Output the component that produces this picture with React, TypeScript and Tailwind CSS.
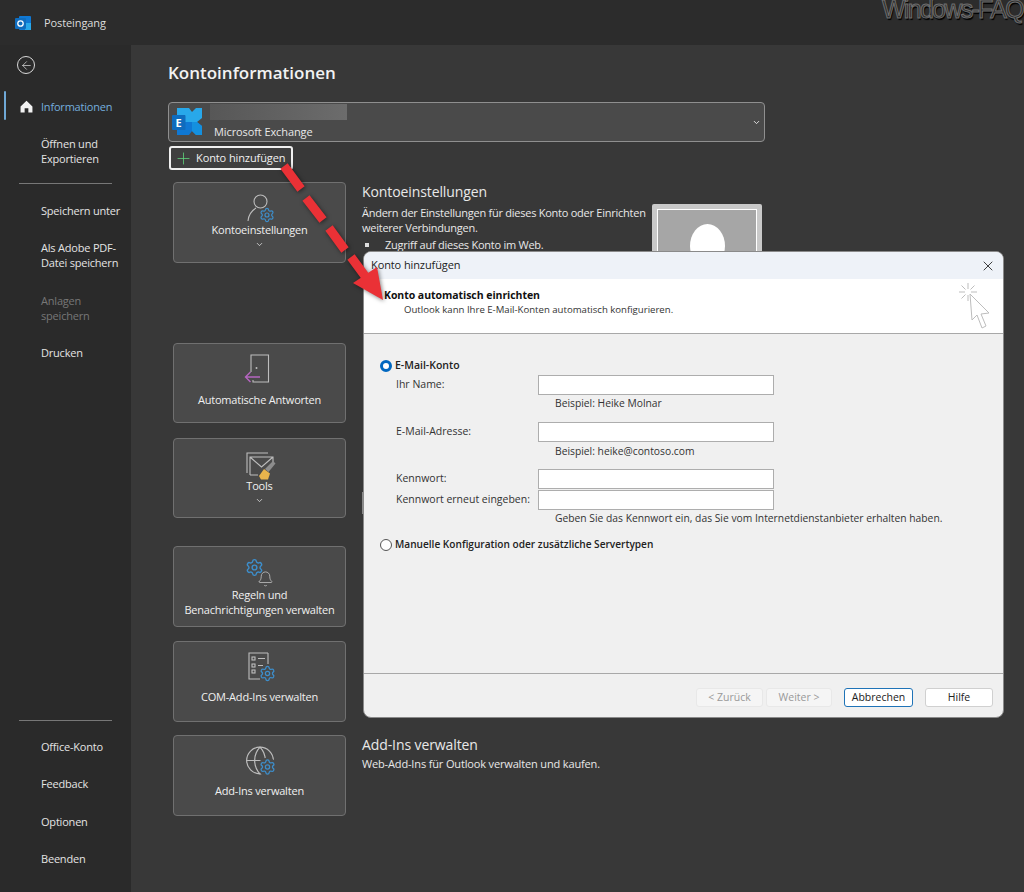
import { ArrowLeft, Bell, ChevronDown, Globe, Plus, Settings, X } from "lucide-react";
import type { ReactNode } from "react";

const FONT = "font-['Open_Sans','Noto_Sans',sans-serif]";
const LINE = "#bdbdbd";
const GEAR = "#3d8ecb";

function SideItem({ lines, className = "", muted = false }: { lines: string[]; className?: string; muted?: boolean }) {
  return (
    <div className={`pl-[41px] text-[11px] leading-[15px] tracking-[-0.2px] ${muted ? "text-[#777]" : "text-[#e4e4e4]"} ${className}`}>
      {lines.map((l) => (
        <div key={l}>{l}</div>
      ))}
    </div>
  );
}

function Sidebar() {
  return (
    <aside className="flex h-full w-[131px] shrink-0 flex-col bg-[#2a2a2a] pb-[26px] pt-[11px]">
      <div className="ml-[17px] flex h-[18px] w-[18px] items-center justify-center rounded-full border border-[#d8d8d8]">
        <ArrowLeft size={13} strokeWidth={1.3} color="#e0e0e0" />
      </div>
      <div className="relative mt-[17px] flex h-[30px] items-center">
        <div className="absolute left-[4px] top-0 h-[29px] w-[2px] rounded bg-[#6fa8d6]" />
        <svg viewBox="0 0 14 14" className="absolute left-[20px] top-[9px] h-[13px] w-[13px]" fill="#f2f2f2">
          <path d="M7 .8 13.4 7v6.4H9V9H5v4.4H.6V7z" />
        </svg>
        <SideItem lines={["Informationen"]} className="!text-[#74aede]" />
      </div>
      <SideItem lines={["Öffnen und", "Exportieren"]} className="mt-[15px]" />
      <div className="ml-[19px] mt-[17px] h-px w-[93px] bg-[#777]" />
      <SideItem lines={["Speichern unter"]} className="mt-[19px]" />
      <SideItem lines={["Als Adobe PDF-", "Datei speichern"]} className="mt-[22px]" />
      <SideItem lines={["Anlagen", "speichern"]} className="mt-[23px]" muted />
      <SideItem lines={["Drucken"]} className="mt-[22px]" />
      <div className="ml-[19px] mt-auto h-px w-[93px] bg-[#777]" />
      <SideItem lines={["Office-Konto"]} className="mt-[18px]" />
      <SideItem lines={["Feedback"]} className="mt-[22px]" />
      <SideItem lines={["Optionen"]} className="mt-[23px]" />
      <SideItem lines={["Beenden"]} className="mt-[22px]" />
    </aside>
  );
}

function Gear({ x, y, size = 15 }: { x: number; y: number; size?: number }) {
  return <Settings x={x} y={y} width={size} height={size} color={GEAR} strokeWidth={1.8} />;
}

function UserIcon() {
  return (
    <svg viewBox="0 0 32 32" className="h-[32px] w-[32px]" fill="none" stroke={LINE} strokeWidth="1.1">
      <circle cx="16.500" cy="8.500" r="6.500" />
      <path d="M4 28c.5-7 4-10.500 8-13" />
      <Gear x={15} y={14} size={16} />
    </svg>
  );
}

function DoorIcon() {
  return (
    <svg viewBox="0 0 32 32" className="h-[32px] w-[32px]" fill="none" stroke={LINE} strokeWidth="1.1">
      <path d="M7 18V1h17.500v27H9v-2" />
      <circle cx="12.500" cy="14" r="1" fill={LINE} stroke="none" />
      <path d="M16 23H1.500M6.500 18l-5 5 5 5" stroke="#b565c0" strokeWidth="1.400" />
    </svg>
  );
}

function MailIcon() {
  return (
    <svg viewBox="0 0 32 32" className="h-[32px] w-[32px]" fill="none" stroke={LINE} strokeWidth="1.1">
      <path d="M3 22V2h21" />
      <path d="M6 24V6h23v7M6 6l11.500 10L29 6M6 24h8" />
      <path d="m21 18 8-8 2.500 2.500-7 8.500z" fill="#8d8d8d" stroke="none" />
      <path d="m15 25 5-7 6 4.500-2 6h-7z" fill="#e9b44c" stroke="none" />
    </svg>
  );
}

function RulesIcon() {
  return (
    <svg viewBox="0 0 32 32" className="h-[32px] w-[32px]" fill="none">
      <Gear x={1} y={1} size={19} />
      <Bell x={13} y={12} width={17} height={20} color={LINE} strokeWidth={1.2} />
    </svg>
  );
}

function ListIcon() {
  return (
    <svg viewBox="0 0 32 32" className="h-[32px] w-[32px]" fill="none" stroke={LINE} strokeWidth="1.1">
      <path d="M24 1H5v26h11M24 1v11" />
      <rect x="8" y="5" width="3" height="3" />
      <rect x="8" y="12" width="3" height="3" />
      <rect x="8" y="18" width="3" height="3" />
      <path d="M14 6.500h7M14 13.500h5" />
      <Gear x={15} y={13} size={17} />
    </svg>
  );
}

function GlobeIcon() {
  return (
    <svg viewBox="0 0 32 32" className="h-[32px] w-[32px]" fill="none">
      <Globe x={0} y={-1.5} width={32} height={32} color={LINE} strokeWidth={0.9} />
      <circle cx="23.500" cy="21" r="9.500" fill="#4a4a4a" />
      <Gear x={15} y={12.5} size={17} />
    </svg>
  );
}

function Card({
  icon,
  label,
  chevron,
  pad = "pt-[10px]",
  gap,
}: {
  icon: ReactNode;
  label: string[];
  chevron?: boolean;
  pad?: string;
  gap: string;
}) {
  return (
    <div className={`ml-[5px] flex h-full w-[173px] shrink-0 flex-col items-center rounded-[4px] border border-[#707070] bg-[#4a4a4a] ${pad}`}>
      {icon}
      <div className={`text-center text-[11px] font-medium leading-[15px] tracking-[-0.2px] text-[#f0f0f0] ${gap}`}>
        {label.map((l) => (
          <div key={l}>{l}</div>
        ))}
      </div>
      {chevron && <ChevronDown size={9} strokeWidth={2} color="#e8e8e8" className="mt-[3px]" />}
    </div>
  );
}

function Section({ className, card, children }: { className: string; card: ReactNode; children?: ReactNode }) {
  return (
    <section className={`flex items-start ${className}`}>
      {card}
      <div className="ml-[16px] min-w-0 flex-1 text-[#e8e8e8]">{children}</div>
    </section>
  );
}

function SectionTitle({ children }: { children: ReactNode }) {
  return <h2 className="text-[14px] leading-[20px] tracking-[-0.1px] text-[#e8e8e8]">{children}</h2>;
}

function ExchangeLogo() {
  return (
    <svg viewBox="0 0 30 28" className="h-[28px] w-[30px]">
      <path d="M5 0h12l3 4 4-4h6v10l-5 4H13V7H5z" fill="#28a8ea" />
      <path d="M13 14h12l5 4v9h-6l-4-4-3 4H5v-6h8z" fill="#0f78d4" />
      <path d="M20 14h5l5 4v9h-6l-4-4z" fill="#1490df" />
      <rect x="0" y="7" width="13.500" height="15" rx="1" fill="#0f6cbd" />
      <text x="6.700" y="18.500" textAnchor="middle" fontSize="11" fontWeight="700" fill="#fff">
        E
      </text>
    </svg>
  );
}

function Main() {
  return (
    <main className="h-full min-w-0 flex-1 bg-[#383838] pl-[37px] pt-[16px]">
      <h1 className="text-[17px] font-semibold leading-[24px] text-[#f2f2f2]">Kontoinformationen</h1>
      <div className="relative mt-[17px] flex h-[40px] w-[597px] items-center rounded-[4px] border border-[#8f8f8f] bg-[#4a4a4a] pl-[3px]">
        <ExchangeLogo />
        <div className="ml-[8px] flex h-full flex-col">
          <div className="mt-[1px] h-[16px] w-[137px] bg-gradient-to-r from-[#575757] to-[#6c6c6c]" />
          <div className="mt-[4px] pl-[4px] text-[11px] leading-[15px] tracking-[-0.1px] text-[#e8e8e8]">Microsoft Exchange</div>
        </div>
        <ChevronDown size={9} strokeWidth={2.5} color="#e8e8e8" className="absolute right-[3px] top-[15px]" />
      </div>
      <button className="ml-[1px] mt-[4px] flex h-[24px] w-[124px] items-center rounded-[3px] border-2 border-[#f0f0f0] bg-[#3f3f3f] pl-[3px] text-[11px] tracking-[-0.1px] text-[#f0f0f0]">
        <Plus size={19} strokeWidth={1} color="#5fd47b" />
        <span className="ml-[3px]">Konto hinzufügen</span>
      </button>

      <Section
        className="mt-[12px] h-[81px]"
        card={<Card icon={<UserIcon />} label={["Kontoeinstellungen"]} chevron gap="mt-[-3px]" />}
      >
        <div className="flex">
          <div className="w-[290px] shrink-0">
            <SectionTitle>Kontoeinstellungen</SectionTitle>
            <p className="mt-[3px] text-[11px] leading-[15px] tracking-[-0.25px]">
              <span className="block whitespace-nowrap">Ändern der Einstellungen für dieses Konto oder Einrichten</span>
              <span className="block">weiterer Verbindungen.</span>
            </p>
            <div className="mt-[2px] flex items-center text-[11px] leading-[15px] tracking-[-0.25px]">
              <span className="ml-[3px] h-[4px] w-[4px] bg-[#ddd]" />
              <span className="ml-[16px]">Zugriff auf dieses Konto im Web.</span>
            </div>
          </div>
          <div className="mt-[22px] h-[110px] w-[110px] shrink-0 rounded-[2px] bg-[#c9c9c9] p-[5px]">
            <div className="flex h-full justify-center border border-white bg-[#a6a6a6] pt-[14px]">
              <div className="h-[44px] w-[35px] rounded-[50%] bg-white" />
            </div>
          </div>
        </div>
      </Section>
      <Section
        className="mt-[80px] h-[80px]"
        card={<Card icon={<DoorIcon />} label={["Automatische Antworten"]} gap="mt-[6px]" />}
      />
      <Section
        className="mt-[15px] h-[80px]"
        card={<Card icon={<MailIcon />} label={["Tools"]} chevron pad="pt-[12px]" gap="mt-[-5px]" />}
      >
        <div className="mt-[54px] h-[22px] w-[6px] border border-[#8a8a8a]" />
      </Section>
      <Section
        className="mt-[28px] h-[81px]"
        card={<Card icon={<RulesIcon />} label={["Regeln und", "Benachrichtigungen verwalten"]} gap="mt-[-2px]" />}
      />
      <Section
        className="mt-[14px] h-[81px]"
        card={<Card icon={<ListIcon />} label={["COM-Add-Ins verwalten"]} gap="mt-[5px]" />}
      />
      <Section
        className="mt-[13px] h-[81px]"
        card={<Card icon={<GlobeIcon />} label={["Add-Ins verwalten"]} gap="mt-[5px]" />}
      >
        <SectionTitle>Add-Ins verwalten</SectionTitle>
        <p className="mt-[1px] text-[11px] leading-[15px] tracking-[-0.15px]">Web-Add-Ins für Outlook verwalten und kaufen.</p>
      </Section>
    </main>
  );
}

function Field({ label, className }: { label: string; className: string }) {
  return (
    <div className={`flex h-[20px] items-center pl-[32px] ${className}`}>
      <label className="w-[142px] text-[10.500px] text-[#333]">{label}</label>
      <input className="h-[20px] w-[236px] border border-[#adadad] bg-white" />
    </div>
  );
}

function Hint({ children, className }: { children: ReactNode; className: string }) {
  return <div className={`h-[14px] pl-[191px] text-[10.300px] leading-[14px] text-[#333] ${className}`}>{children}</div>;
}

function WizardCursor() {
  return (
    <svg viewBox="0 0 32 46" className="h-[46px] w-[32px]" fill="none" stroke="#bdbdbd" strokeWidth="1">
      <path d="M9 0v6M9 12v6M0 9h6M12 9h6M2.500 2.500l4 4M15.500 2.500l-4 4M2.500 15.500l4-4" />
      <path d="m11 11 2 26 5-5 5 13 4-2-5-12 8-1z" fill="#fff" />
    </svg>
  );
}

function Dialog() {
  return (
    <div className="absolute left-[363px] top-[251px] flex h-[467px] w-[641px] flex-col overflow-hidden rounded-[8px] border border-[#8a8a8a] bg-[#f0f0f0] text-black">
      <div className="flex h-[27px] shrink-0 items-center justify-between bg-[#eef2f8] px-[7px]">
        <span className="text-[11px] tracking-[-0.1px] text-[#222]">Konto hinzufügen</span>
        <X size={16} strokeWidth={1.3} color="#222" />
      </div>
      <div className="flex h-[55px] shrink-0 justify-between border-b border-[#a8a8a8] bg-white pl-[20px] pr-[12px] pt-[9px]">
        <div>
          <div className="text-[10.500px] font-bold leading-[14px] tracking-[-0.05px] text-[#111]">Konto automatisch einrichten</div>
          <div className="pl-[20px] text-[9.600px] leading-[16px] text-[#333]">
            Outlook kann Ihre E-Mail-Konten automatisch konfigurieren.
          </div>
        </div>
        <div className="-mt-[5px]">
          <WizardCursor />
        </div>
      </div>
      <div className="flex-1 pt-[25px]">
        <div className="flex h-[14px] items-center pl-[16px]">
          <span className="h-[12px] w-[12px] rounded-full border-[3.500px] border-[#0067c0] bg-white" />
          <span className="ml-[3px] text-[10.500px] font-semibold text-[#222]">E-Mail-Konto</span>
        </div>
        <Field label="Ihr Name:" className="mt-[2px]" />
        <Hint className="mt-[1px]">Beispiel: Heike Molnar</Hint>
        <Field label="E-Mail-Adresse:" className="mt-[12px]" />
        <Hint className="mt-[2px]">Beispiel: heike@contoso.com</Hint>
        <Field label="Kennwort:" className="mt-[11px]" />
        <Field label="Kennwort erneut eingeben:" className="mt-[1px]" />
        <Hint className="mt-[1px]">Geben Sie das Kennwort ein, das Sie vom Internetdienstanbieter erhalten haben.</Hint>
        <div className="mt-[13px] flex h-[14px] items-center pl-[16px]">
          <span className="h-[12px] w-[12px] rounded-full border border-[#555] bg-white" />
          <span className="ml-[3px] text-[10.100px] font-semibold text-[#222]">
            Manuelle Konfiguration oder zusätzliche Servertypen
          </span>
        </div>
      </div>
      <div className="flex h-[44px] shrink-0 items-start border-t border-[#a8a8a8] pl-[332px] pt-[14px] text-[10.500px]">
        <button className="h-[19px] w-[67px] rounded-[3px] border border-[#e8e8e8] bg-[#f5f5f5] text-[#999]">&lt; Zurück</button>
        <button className="ml-[3px] h-[19px] w-[66px] rounded-[3px] border border-[#e8e8e8] bg-[#f5f5f5] text-[#999]">Weiter &gt;</button>
        <button className="ml-[12px] h-[19px] w-[69px] rounded-[3px] border border-[#1f73b7] bg-white text-[#222]">Abbrechen</button>
        <button className="ml-[12px] h-[19px] w-[68px] rounded-[3px] border border-[#d0d0d0] bg-white text-[#222]">Hilfe</button>
      </div>
    </div>
  );
}

function RedArrow() {
  return (
    <svg
      viewBox="0 0 120 145"
      className="absolute left-[275px] top-[160px] h-[145px] w-[120px] drop-shadow-[1px_1px_2px_rgba(0,0,0,0.5)]"
      fill="none"
    >
      <g stroke="#ea3136" strokeWidth="9">
        <path d="M9 6 26 29M31 38 48 60M54 68 70 90M76 97 90 116" />
      </g>
      <path d="M108 140 78 123 102 107z" fill="#ea3136" />
    </svg>
  );
}

export default function App() {
  return (
    <div className={`relative flex h-[892px] w-[1024px] flex-col overflow-hidden bg-[#2a2a2a] ${FONT}`}>
      <header className="flex h-[45px] shrink-0 items-center bg-[#2c2c2c] pl-[15px]">
        <svg viewBox="0 0 16 16" className="mt-[1px] h-[16px] w-[16px]">
          <rect x="4" y="1" width="12" height="14" rx="1" fill="#0f78d4" />
          <rect x="10" y="8" width="6" height="7" fill="#28a8ea" />
          <rect x="0" y="3" width="11" height="11" rx="1" fill="#0f6cbd" />
          <circle cx="5.500" cy="8.500" r="2.700" fill="none" stroke="#fff" strokeWidth="1.300" />
        </svg>
        <span className="ml-[13px] mt-[1px] text-[11px] tracking-[-0.1px] text-[#dcdcdc]">Posteingang</span>
      </header>
      <div className="flex h-[847px]">
        <Sidebar />
        <Main />
      </div>
      <Dialog />
      <RedArrow />
      <div className="absolute right-[1px] top-[-6px] font-['Liberation_Sans',sans-serif] text-[25px] leading-[30px] tracking-[-1.7px] text-[#2c2c2c] [-webkit-text-stroke:1px_#6e6e6e] [text-shadow:1px_2px_1px_#000]">
        Windows-FAQ
      </div>
    </div>
  );
}
